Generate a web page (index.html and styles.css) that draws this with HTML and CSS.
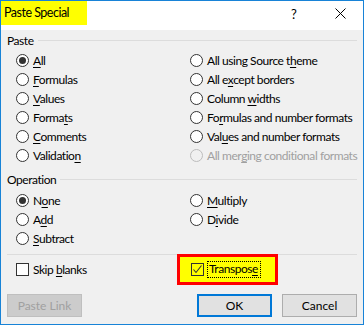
FILE: index.html
```html
<!DOCTYPE html>
<html>
<head>
<meta charset="utf-8">
<link rel="stylesheet" href="styles.css">
</head>
<body>
<div class="window">
  <div class="titlebar">
    <div class="title">Paste Special</div>
    <div class="tb-spacer"></div>
    <div class="tb-btn help">?</div>
    <div class="tb-btn close">
      <svg width="11" height="11" viewBox="0 0 11 11"><path d="M0.5 0.5L10.5 10.5M10.5 0.5L0.5 10.5" stroke="#000" stroke-width="1" fill="none"/></svg>
    </div>
  </div>
  <div class="content">
    <div class="group-head"><span>Paste</span><div class="rule"></div></div>
    <div class="options paste-opts">
      <div class="opt"><span class="radio checked"></span><span class="lbl"><u>A</u>ll</span></div>
      <div class="opt"><span class="radio"></span><span class="lbl">All using Source t<u>h</u>eme</span></div>
      <div class="opt"><span class="radio"></span><span class="lbl"><u>F</u>ormulas</span></div>
      <div class="opt"><span class="radio"></span><span class="lbl">All e<u>x</u>cept borders</span></div>
      <div class="opt"><span class="radio"></span><span class="lbl"><u>V</u>alues</span></div>
      <div class="opt"><span class="radio"></span><span class="lbl">Column <u>w</u>idths</span></div>
      <div class="opt"><span class="radio"></span><span class="lbl">Forma<u>t</u>s</span></div>
      <div class="opt"><span class="radio"></span><span class="lbl">Fo<u>r</u>mulas and number formats</span></div>
      <div class="opt"><span class="radio"></span><span class="lbl"><u>C</u>omments</span></div>
      <div class="opt"><span class="radio"></span><span class="lbl">Val<u>u</u>es and number formats</span></div>
      <div class="opt"><span class="radio"></span><span class="lbl">Validatio<u>n</u></span></div>
      <div class="opt disabled"><span class="radio"></span><span class="lbl">All mer<u>g</u>ing conditional formats</span></div>
    </div>
    <div class="group-head op-head"><span>Operation</span><div class="rule"></div></div>
    <div class="options op-opts">
      <div class="opt"><span class="radio checked"></span><span class="lbl">N<u>o</u>ne</span></div>
      <div class="opt"><span class="radio"></span><span class="lbl"><u>M</u>ultiply</span></div>
      <div class="opt"><span class="radio"></span><span class="lbl">A<u>d</u>d</span></div>
      <div class="opt"><span class="radio"></span><span class="lbl">D<u>i</u>vide</span></div>
      <div class="opt"><span class="radio"></span><span class="lbl"><u>S</u>ubtract</span></div>
    </div>
    <div class="sep"></div>
    <div class="bottom-row">
      <div class="check"><span class="checkbox"></span><span class="lbl">Skip <u>b</u>lanks</span></div>
      <div class="highlight">
        <span class="checkbox on"><svg width="11" height="11" viewBox="0 0 11 11"><path d="M1.5 5.5L4 8.5L9.5 1.5" stroke="#333" stroke-width="1.1" fill="none"/></svg></span>
        <span class="lbl focus">Transpos<u>e</u></span>
      </div>
    </div>
    <div class="buttons">
      <button class="btn disabled">Paste Link</button>
      <div class="btn-spacer"></div>
      <button class="btn default">OK</button>
      <button class="btn">Cancel</button>
    </div>
  </div>
</div>
</body>
</html>
```
FILE: styles.css
```css
body {
  margin: 0;
  font-family: "Segoe UI", Lato, "Noto Sans", sans-serif;
  font-size: 12px;
  letter-spacing: -0.45px;
  color: #000;
}
.window {
  width: 364px;
  height: 325px;
  box-sizing: border-box;
  border: 1px solid #1883d7;
  background: #f0f0f0;
  display: flex;
  flex-direction: column;
  overflow: hidden;
}
.titlebar {
  height: 29px;
  background: #fff;
  display: flex;
  align-items: flex-start;
  flex: none;
}
.title {
  background: #ffff00;
  height: 25px;
  line-height: 25px;
  width: 87px;
  margin: -1px 0 0 -1px;
  padding-left: 4px;
  box-sizing: border-box;
  white-space: nowrap;
  font-size: 12.5px;
  letter-spacing: -0.5px;
}
.tb-spacer { flex: 1; }
.tb-btn {
  width: 46px;
  height: 25px;
  display: flex;
  align-items: center;
  justify-content: center;
  font-size: 13px;
  letter-spacing: 0;
}
.content {
  flex: 1;
  display: flex;
  flex-direction: column;
  padding: 1px 6px 7px 6px;
}
.group-head {
  height: 18px;
  display: flex;
  align-items: center;
  gap: 4px;
}
.rule {
  flex: 1;
  height: 1px;
  background: #dcdcdc;
}
.options {
  display: grid;
  grid-template-columns: 174px 1fr;
  grid-auto-rows: 19px;
  margin-top: 2px;
}
.op-head { margin-top: 5px; }
.op-opts { margin-top: 3px; }
.opt, .check {
  display: flex;
  align-items: center;
  gap: 4px;
  padding-left: 9px;
  white-space: nowrap;
}
u {
  text-underline-offset: 2px;
  text-decoration-thickness: 1px;
}
.radio {
  width: 13px;
  height: 13px;
  box-sizing: border-box;
  border: 1px solid #333;
  border-radius: 50%;
  background: #fff;
  position: relative;
  flex: none;
}
.radio.checked::after {
  content: "";
  position: absolute;
  left: 2px;
  top: 2px;
  width: 7px;
  height: 7px;
  border-radius: 50%;
  background: #333;
}
.disabled .radio {
  border-color: #bcbcbc;
  background: transparent;
}
.disabled .lbl { color: #a0a0a0; }
.sep {
  height: 1px;
  background: #dcdcdc;
  margin-top: 6px;
}
.bottom-row {
  display: grid;
  grid-template-columns: 174px 1fr;
  align-items: center;
  height: 31px;
  margin-top: -1px;
}
.checkbox {
  width: 13px;
  height: 13px;
  box-sizing: border-box;
  border: 1px solid #333;
  background: #fff;
  flex: none;
  display: flex;
}
.checkbox.on { background: transparent; }
.highlight {
  justify-self: start;
  margin-left: -4px;
  width: 101px;
  height: 31px;
  box-sizing: border-box;
  border: 3px solid #ff0000;
  background: #ffff00;
  display: flex;
  align-items: center;
  padding-left: 11px;
  gap: 3px;
}
.focus {
  border: 1px dotted #000;
  padding: 0 2px 0 1px;
  height: 17px;
  box-sizing: border-box;
  line-height: 14px;
}
.buttons {
  display: flex;
  margin-top: 9px;
  gap: 10px;
}
.btn-spacer { flex: 1; margin-left: -10px; }
.btn {
  width: 75px;
  height: 23px;
  box-sizing: border-box;
  border: 1px solid #adadad;
  background: #e1e1e1;
  font: inherit;
  color: #000;
  padding: 0;
  margin: 0;
}
.btn.default { border: 2px solid #0078d7; }
.btn.disabled {
  background: #cccccc;
  border-color: #bfbfbf;
  color: #a0a0a0;
}
```
